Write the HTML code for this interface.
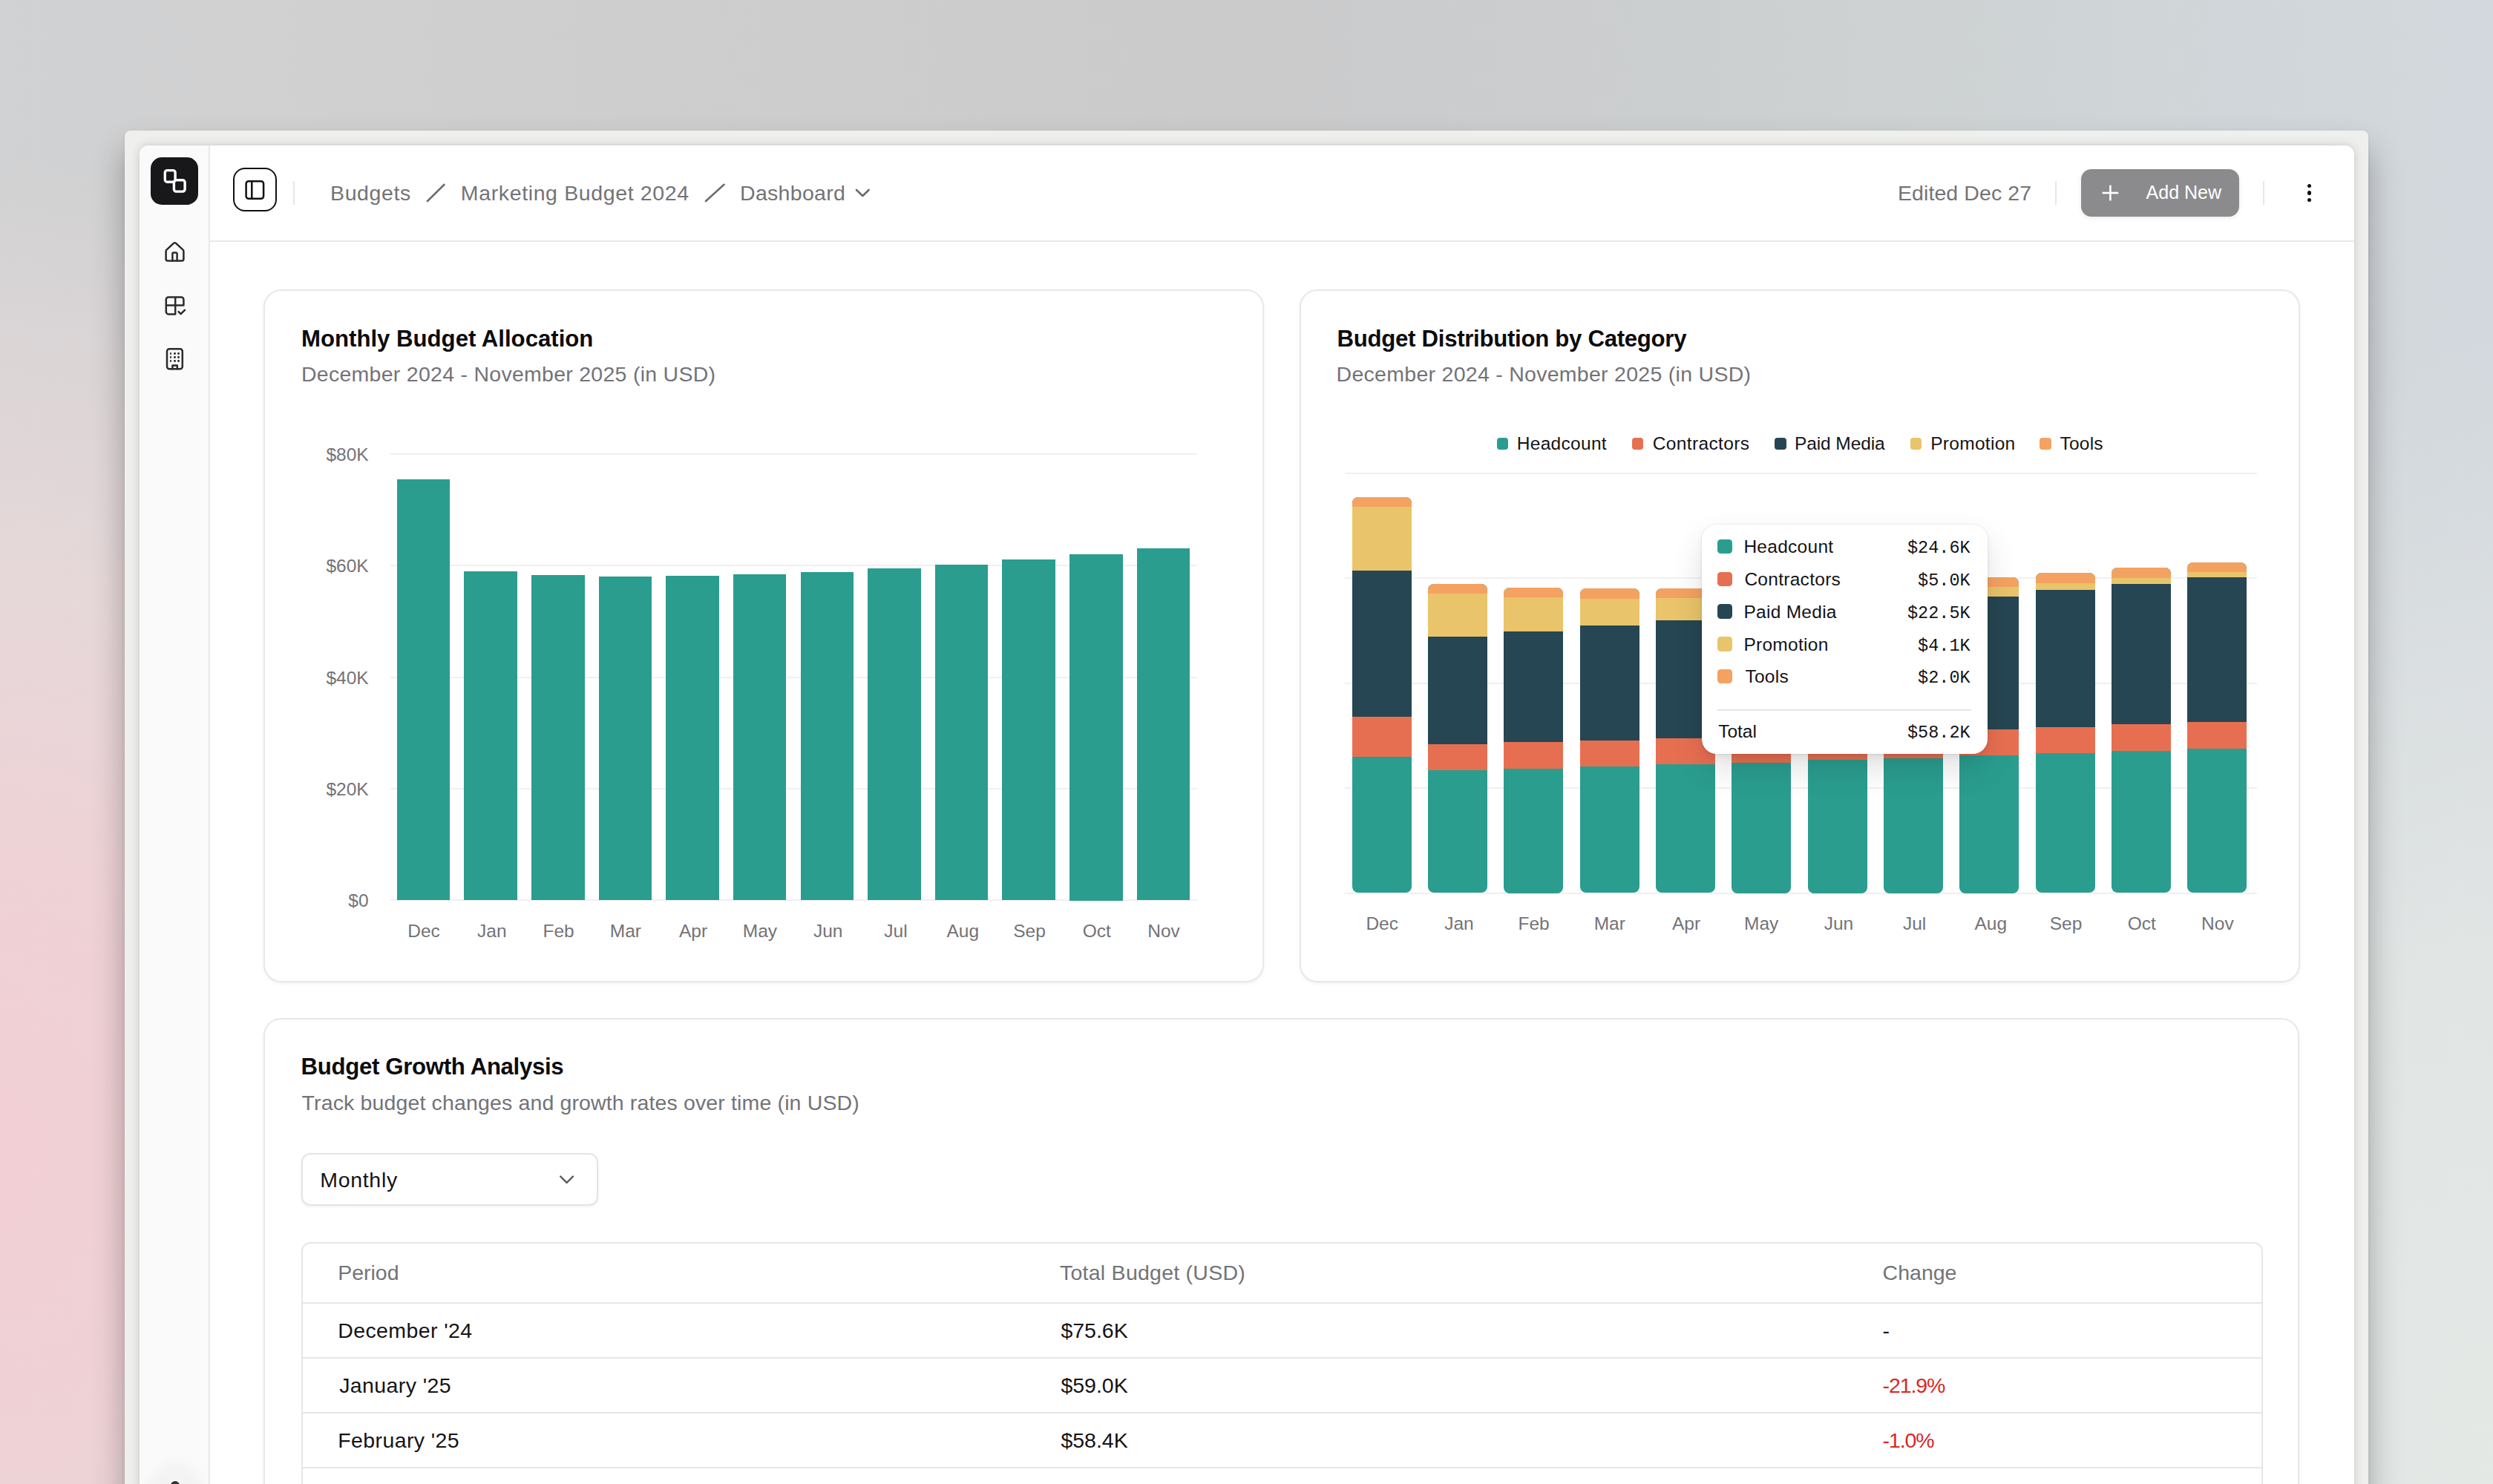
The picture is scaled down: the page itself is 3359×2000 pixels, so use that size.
<!DOCTYPE html>
<html>
<head>
<meta charset="utf-8">
<style>
*{box-sizing:border-box;margin:0;padding:0}
html,body{width:3359px;height:2000px;overflow:hidden}
body{position:relative;font-family:"Liberation Sans",sans-serif;
background:
 radial-gradient(ellipse 900px 1350px at 0px 1560px, rgba(242,207,212,1) 0%, rgba(240,210,214,0.95) 30%, rgba(236,218,219,0.75) 60%, rgba(230,222,223,0) 100%),
 radial-gradient(ellipse 800px 1500px at 3359px 1950px, rgba(228,233,230,1) 0%, rgba(227,231,229,0.85) 45%, rgba(227,231,229,0) 100%),
 linear-gradient(90deg,#d1d2d3 0%,#cfcecf 25%,#cbcbcc 50%,#cbcdce 62%,#cdd1d1 74%,#d0d5d8 86%,#d3d8de 100%);
}
.abs{position:absolute}
.t{position:absolute;white-space:nowrap;line-height:1}
#frame{position:absolute;left:168px;top:176px;width:3023px;height:1900px;border-radius:8px;background:#efefee;
 box-shadow:0 26px 44px rgba(0,0,0,0.30), 0 2px 4px rgba(0,0,0,0.08)}
#win{position:absolute;left:188px;top:196px;width:2984px;height:1900px;border-radius:12px;background:#fff;overflow:hidden;
 box-shadow:0 0 14px rgba(0,0,0,0.16), 0 0 2px rgba(0,0,0,0.08)}
#side{position:absolute;left:0;top:0;width:95px;height:100%;background:#fafafa;border-right:2px solid #e9e9e9}
</style>
</head>
<body>
<div id="frame"></div>
<div id="win"><div id="side"></div></div>
<div class='abs' style='left:203.30px;top:212.00px;width:64.10px;height:64.00px;background:#18181b;border-radius:15px'></div>
<svg class='abs' style='left:0;top:0' width='400' height='400' viewBox='0 0 400 400'>
<rect x='222.3' y='229.6' width='13.8' height='15.6' rx='3' fill='none' stroke='#fff' stroke-width='3.4'/>
<rect x='234.4' y='242.7' width='14.7' height='15.4' rx='3' fill='none' stroke='#fff' stroke-width='3.4'/>
</svg>
<div class='abs' style='left:314.00px;top:226.00px;width:59.20px;height:59.40px;border:2.8px solid #111;border-radius:16px;background:#fff'></div>
<svg class='abs' style='left:0;top:0' width='400' height='400' viewBox='0 0 400 400'>
<rect x='331.6' y='244.2' width='23.5' height='23.6' rx='3.5' fill='none' stroke='#111' stroke-width='2.5'/>
<line x1='339.3' y1='244.2' x2='339.3' y2='267.8' stroke='#111' stroke-width='2.5'/>
</svg>
<div class='abs' style='left:395.00px;top:244.00px;width:2.00px;height:32.00px;background:#e7e7e7'></div>
<div class='t' id='bc1' style="top:246.38px;font-size:28.5px;color:#737378;font-weight:400;font-family:'Liberation Sans';letter-spacing:0.62px;left:445.00px">Budgets</div>
<div class='t' id='bc2' style="top:246.38px;font-size:28.5px;color:#737378;font-weight:400;font-family:'Liberation Sans';letter-spacing:0.63px;left:620.80px">Marketing Budget 2024</div>
<div class='t' id='bc3' style="top:246.38px;font-size:28.5px;color:#737378;font-weight:400;font-family:'Liberation Sans';letter-spacing:0.3px;left:997.00px">Dashboard</div>
<svg class='abs' style='left:0;top:0' width='1300' height='400' viewBox='0 0 1300 400'>
<line x1='576' y1='271' x2='598.5' y2='248.8' stroke='#6b6b70' stroke-width='2.6' stroke-linecap='round'/>
<line x1='951' y1='271' x2='975.5' y2='248.8' stroke='#6b6b70' stroke-width='2.6' stroke-linecap='round'/>
<polyline points='1154,256 1162.3,264 1170.6,256' fill='none' stroke='#6b6b70' stroke-width='2.6' stroke-linecap='round' stroke-linejoin='round'/>
</svg>
<div class='t' id='edited' style="top:246.38px;font-size:28.5px;color:#737378;font-weight:400;font-family:'Liberation Sans';letter-spacing:0.08px;left:2557.00px">Edited Dec 27</div>
<div class='abs' style='left:2769.40px;top:244.00px;width:2.00px;height:31.50px;background:#e7e7e7'></div>
<div class='abs' style='left:2803.70px;top:228.10px;width:213.30px;height:63.70px;background:#8b8b8d;border-radius:14px;box-shadow:0 2px 6px rgba(0,0,0,0.08)'></div>
<svg class='abs' style='left:2800px;top:220px' width='80' height='80' viewBox='2800 220 80 80'>
<line x1='2843.4' y1='249.6' x2='2843.4' y2='270.4' stroke='#fff' stroke-width='2.6'/>
<line x1='2832.6' y1='260' x2='2854.2' y2='260' stroke='#fff' stroke-width='2.6'/>
</svg>
<div class='t' id='addnew' style="top:247.25px;font-size:25px;color:#ffffff;font-weight:400;font-family:'Liberation Sans';left:2891.60px">Add New</div>
<div class='abs' style='left:3049.40px;top:244.00px;width:2.00px;height:31.50px;background:#e7e7e7'></div>
<div class='abs' style='left:3108.70px;top:247.70px;width:5.60px;height:5.60px;background:#111;border-radius:50%'></div>
<div class='abs' style='left:3108.70px;top:257.20px;width:5.60px;height:5.60px;background:#111;border-radius:50%'></div>
<div class='abs' style='left:3108.70px;top:266.60px;width:5.60px;height:5.60px;background:#111;border-radius:50%'></div>
<div class='abs' style='left:282.00px;top:323.60px;width:2890.00px;height:2.00px;background:#e9e9e9'></div>
<svg class='abs' style='left:200px;top:300px' width='80' height='220' viewBox='200 300 80 220' fill='none' stroke='#2b2b2e' stroke-width='2.5' stroke-linecap='round' stroke-linejoin='round'>
<path d='M223.6 338.5 V349 a2.5 2.5 0 0 0 2.5 2.5 H244.9 a2.5 2.5 0 0 0 2.5-2.5 V338.5 a2.5 2.5 0 0 0 -0.9-1.9 L237.1 327.9 a2.5 2.5 0 0 0 -3.2 0 L224.5 336.6 a2.5 2.5 0 0 0 -0.9 1.9 Z'/>
<path d='M232.4 351.5 V342 a1.5 1.5 0 0 1 1.5-1.5 H237.1 a1.5 1.5 0 0 1 1.5 1.5 V351.5'/>
<path d='M236.2 423.4 H227 a3.2 3.2 0 0 1 -3.2-3.2 V403.6 a3.2 3.2 0 0 1 3.2-3.2 H244.2 a3.2 3.2 0 0 1 3.2 3.2 V411.5 H236.2 V400.4 M223.8 411.5 H236.2 V423.4'/>
<path d='M240.6 420.2 L243.6 423.2 L249 417.8'/>
<rect x='225' y='470.2' width='20.8' height='27.1' rx='3.2'/>
<path d='M232.4 497.3 V492.5 H238.8 V497.3'/>
</svg>
<div class='abs' style='left:228.70px;top:474.80px;width:2.80px;height:2.80px;background:#2b2b2e;border-radius:50%'></div>
<div class='abs' style='left:234.00px;top:474.80px;width:2.80px;height:2.80px;background:#2b2b2e;border-radius:50%'></div>
<div class='abs' style='left:239.30px;top:474.80px;width:2.80px;height:2.80px;background:#2b2b2e;border-radius:50%'></div>
<div class='abs' style='left:228.70px;top:479.90px;width:2.80px;height:2.80px;background:#2b2b2e;border-radius:50%'></div>
<div class='abs' style='left:234.00px;top:479.90px;width:2.80px;height:2.80px;background:#2b2b2e;border-radius:50%'></div>
<div class='abs' style='left:239.30px;top:479.90px;width:2.80px;height:2.80px;background:#2b2b2e;border-radius:50%'></div>
<div class='abs' style='left:228.70px;top:485.00px;width:2.80px;height:2.80px;background:#2b2b2e;border-radius:50%'></div>
<div class='abs' style='left:234.00px;top:485.00px;width:2.80px;height:2.80px;background:#2b2b2e;border-radius:50%'></div>
<div class='abs' style='left:239.30px;top:485.00px;width:2.80px;height:2.80px;background:#2b2b2e;border-radius:50%'></div>
<div class='abs' style='left:355.40px;top:389.50px;width:1348.00px;height:934.00px;border:2px solid #e8e8e8;border-radius:24px;background:#fff;box-shadow:0 2px 5px rgba(0,0,0,0.05)'></div>
<div class='abs' style='left:1751.30px;top:389.50px;width:1347.40px;height:934.00px;border:2px solid #e8e8e8;border-radius:24px;background:#fff;box-shadow:0 2px 5px rgba(0,0,0,0.05)'></div>
<div class='abs' style='left:355.20px;top:1371.50px;width:2742.80px;height:728.50px;border:2px solid #e8e8e8;border-radius:24px;background:#fff;box-shadow:0 2px 5px rgba(0,0,0,0.05)'></div>
<div class='t' id='c1title' style="top:440.68px;font-size:31.2px;color:#0c0c0e;font-weight:700;font-family:'Liberation Sans';letter-spacing:-0.02px;left:406.00px">Monthly Budget Allocation</div>
<div class='t' id='c1sub' style="top:490.07px;font-size:28.5px;color:#737378;font-weight:400;font-family:'Liberation Sans';letter-spacing:0.27px;left:406.00px">December 2024 - November 2025 (in USD)</div>
<div class='abs' style='left:525.70px;top:610.70px;width:1087.50px;height:2.00px;background:#f0f0f0'></div>
<div class='abs' style='left:525.70px;top:761.10px;width:1087.50px;height:2.00px;background:#f0f0f0'></div>
<div class='abs' style='left:525.70px;top:911.50px;width:1087.50px;height:2.00px;background:#f0f0f0'></div>
<div class='abs' style='left:525.70px;top:1061.90px;width:1087.50px;height:2.00px;background:#f0f0f0'></div>
<div class='abs' style='left:525.70px;top:1212.30px;width:1087.50px;height:2.00px;background:#f0f0f0'></div>
<div class='t' id='yl0' style="top:601.17px;font-size:24.5px;color:#737378;font-weight:400;font-family:'Liberation Sans';right:2862.40px">$80K</div>
<div class='t' id='yl1' style="top:751.47px;font-size:24.5px;color:#737378;font-weight:400;font-family:'Liberation Sans';right:2862.40px">$60K</div>
<div class='t' id='yl2' style="top:901.77px;font-size:24.5px;color:#737378;font-weight:400;font-family:'Liberation Sans';right:2862.40px">$40K</div>
<div class='t' id='yl3' style="top:1052.08px;font-size:24.5px;color:#737378;font-weight:400;font-family:'Liberation Sans';right:2862.40px">$20K</div>
<div class='t' id='yl4' style="top:1202.38px;font-size:24.5px;color:#737378;font-weight:400;font-family:'Liberation Sans';right:2862.40px">$0</div>
<div class='abs' style='left:534.70px;top:645.80px;width:71.60px;height:567.70px;background:#2a9d8f'></div>
<div class='t' id='x1_0' style="top:1243.27px;font-size:24.5px;color:#737378;font-weight:400;font-family:'Liberation Sans';left:271.00px;width:600px;text-align:center">Dec</div>
<div class='abs' style='left:625.34px;top:770.20px;width:71.60px;height:443.30px;background:#2a9d8f'></div>
<div class='t' id='x1_1' style="top:1243.27px;font-size:24.5px;color:#737378;font-weight:400;font-family:'Liberation Sans';left:362.78px;width:600px;text-align:center">Jan</div>
<div class='abs' style='left:715.98px;top:774.70px;width:71.60px;height:438.80px;background:#2a9d8f'></div>
<div class='t' id='x1_2' style="top:1243.27px;font-size:24.5px;color:#737378;font-weight:400;font-family:'Liberation Sans';left:452.56px;width:600px;text-align:center">Feb</div>
<div class='abs' style='left:806.62px;top:776.60px;width:71.60px;height:436.90px;background:#2a9d8f'></div>
<div class='t' id='x1_3' style="top:1243.27px;font-size:24.5px;color:#737378;font-weight:400;font-family:'Liberation Sans';left:542.84px;width:600px;text-align:center">Mar</div>
<div class='abs' style='left:897.26px;top:776.40px;width:71.60px;height:437.10px;background:#2a9d8f'></div>
<div class='t' id='x1_4' style="top:1243.27px;font-size:24.5px;color:#737378;font-weight:400;font-family:'Liberation Sans';left:634.12px;width:600px;text-align:center">Apr</div>
<div class='abs' style='left:987.90px;top:774.20px;width:71.60px;height:439.30px;background:#2a9d8f'></div>
<div class='t' id='x1_5' style="top:1243.27px;font-size:24.5px;color:#737378;font-weight:400;font-family:'Liberation Sans';left:723.90px;width:600px;text-align:center">May</div>
<div class='abs' style='left:1078.54px;top:771.10px;width:71.60px;height:442.40px;background:#2a9d8f'></div>
<div class='t' id='x1_6' style="top:1243.27px;font-size:24.5px;color:#737378;font-weight:400;font-family:'Liberation Sans';left:815.68px;width:600px;text-align:center">Jun</div>
<div class='abs' style='left:1169.18px;top:766.10px;width:71.60px;height:447.40px;background:#2a9d8f'></div>
<div class='t' id='x1_7' style="top:1243.27px;font-size:24.5px;color:#737378;font-weight:400;font-family:'Liberation Sans';left:906.96px;width:600px;text-align:center">Jul</div>
<div class='abs' style='left:1259.82px;top:760.70px;width:71.60px;height:452.80px;background:#2a9d8f'></div>
<div class='t' id='x1_8' style="top:1243.27px;font-size:24.5px;color:#737378;font-weight:400;font-family:'Liberation Sans';left:997.24px;width:600px;text-align:center">Aug</div>
<div class='abs' style='left:1350.46px;top:754.10px;width:71.60px;height:459.40px;background:#2a9d8f'></div>
<div class='t' id='x1_9' style="top:1243.27px;font-size:24.5px;color:#737378;font-weight:400;font-family:'Liberation Sans';left:1087.02px;width:600px;text-align:center">Sep</div>
<div class='abs' style='left:1441.10px;top:747.00px;width:71.60px;height:466.50px;background:#2a9d8f'></div>
<div class='t' id='x1_10' style="top:1243.27px;font-size:24.5px;color:#737378;font-weight:400;font-family:'Liberation Sans';left:1177.80px;width:600px;text-align:center">Oct</div>
<div class='abs' style='left:1531.74px;top:738.90px;width:71.60px;height:474.60px;background:#2a9d8f'></div>
<div class='t' id='x1_11' style="top:1243.27px;font-size:24.5px;color:#737378;font-weight:400;font-family:'Liberation Sans';left:1268.08px;width:600px;text-align:center">Nov</div>
<div class='t' id='c2title' style="top:440.68px;font-size:31.2px;color:#0c0c0e;font-weight:700;font-family:'Liberation Sans';letter-spacing:-0.3px;left:1801.60px">Budget Distribution by Category</div>
<div class='t' id='c2sub' style="top:489.98px;font-size:28.5px;color:#737378;font-weight:400;font-family:'Liberation Sans';letter-spacing:0.28px;left:1800.60px">December 2024 - November 2025 (in USD)</div>
<div class='abs' style='left:2016.60px;top:590.10px;width:15.60px;height:15.60px;background:#2a9d8f;border-radius:4px'></div>
<div class='t' id='lg0' style="top:586.17px;font-size:24.5px;color:#141416;font-weight:400;font-family:'Liberation Sans';letter-spacing:0.29px;left:2043.80px">Headcount</div>
<div class='abs' style='left:2198.90px;top:590.10px;width:15.60px;height:15.60px;background:#e76f51;border-radius:4px'></div>
<div class='t' id='lg1' style="top:586.17px;font-size:24.5px;color:#141416;font-weight:400;font-family:'Liberation Sans';letter-spacing:0.36px;left:2226.80px">Contractors</div>
<div class='abs' style='left:2391.10px;top:590.10px;width:15.60px;height:15.60px;background:#264653;border-radius:4px'></div>
<div class='t' id='lg2' style="top:586.17px;font-size:24.5px;color:#141416;font-weight:400;font-family:'Liberation Sans';letter-spacing:-0.1px;left:2418.00px">Paid Media</div>
<div class='abs' style='left:2573.90px;top:590.10px;width:15.60px;height:15.60px;background:#e9c46a;border-radius:4px'></div>
<div class='t' id='lg3' style="top:586.17px;font-size:24.5px;color:#141416;font-weight:400;font-family:'Liberation Sans';letter-spacing:0.3px;left:2601.20px">Promotion</div>
<div class='abs' style='left:2748.10px;top:590.10px;width:15.60px;height:15.60px;background:#f4a261;border-radius:4px'></div>
<div class='t' id='lg4' style="top:586.17px;font-size:24.5px;color:#141416;font-weight:400;font-family:'Liberation Sans';letter-spacing:0.25px;left:2775.40px">Tools</div>
<div class='abs' style='left:1811.80px;top:636.60px;width:1228.80px;height:2.00px;background:#f0f0f0'></div>
<div class='abs' style='left:1811.80px;top:778.00px;width:1228.80px;height:2.00px;background:#f0f0f0'></div>
<div class='abs' style='left:1811.80px;top:919.50px;width:1228.80px;height:2.00px;background:#f0f0f0'></div>
<div class='abs' style='left:1811.80px;top:1061.00px;width:1228.80px;height:2.00px;background:#f0f0f0'></div>
<div class='abs' style='left:1811.80px;top:1202.50px;width:1228.80px;height:2.00px;background:#f0f0f0'></div>
<div class='abs' style='left:1821.60px;top:669.60px;width:80px;height:533.90px;border-radius:8px;overflow:hidden;background:#2a9d8f'><div class='abs' style='left:0;top:0;width:80px;height:13.50px;background:#f4a261'></div><div class='abs' style='left:0;top:13.50px;width:80px;height:85.70px;background:#e9c46a'></div><div class='abs' style='left:0;top:99.20px;width:80px;height:197.30px;background:#264653'></div><div class='abs' style='left:0;top:296.50px;width:80px;height:53.60px;background:#e76f51'></div></div>
<div class='t' id='x2_0' style="top:1233.17px;font-size:24.5px;color:#737378;font-weight:400;font-family:'Liberation Sans';left:1562.20px;width:600px;text-align:center">Dec</div>
<div class='abs' style='left:1923.95px;top:787.20px;width:80px;height:416.30px;border-radius:8px;overflow:hidden;background:#2a9d8f'><div class='abs' style='left:0;top:0;width:80px;height:13.20px;background:#f4a261'></div><div class='abs' style='left:0;top:13.20px;width:80px;height:57.40px;background:#e9c46a'></div><div class='abs' style='left:0;top:70.60px;width:80px;height:145.10px;background:#264653'></div><div class='abs' style='left:0;top:215.70px;width:80px;height:35.10px;background:#e76f51'></div></div>
<div class='t' id='x2_1' style="top:1233.17px;font-size:24.5px;color:#737378;font-weight:400;font-family:'Liberation Sans';left:1665.90px;width:600px;text-align:center">Jan</div>
<div class='abs' style='left:2026.30px;top:791.50px;width:80px;height:412.00px;border-radius:8px;overflow:hidden;background:#2a9d8f'><div class='abs' style='left:0;top:0;width:80px;height:13.50px;background:#f4a261'></div><div class='abs' style='left:0;top:13.50px;width:80px;height:45.80px;background:#e9c46a'></div><div class='abs' style='left:0;top:59.30px;width:80px;height:149.20px;background:#264653'></div><div class='abs' style='left:0;top:208.50px;width:80px;height:35.80px;background:#e76f51'></div></div>
<div class='t' id='x2_2' style="top:1233.17px;font-size:24.5px;color:#737378;font-weight:400;font-family:'Liberation Sans';left:1766.60px;width:600px;text-align:center">Feb</div>
<div class='abs' style='left:2128.65px;top:793.10px;width:80px;height:410.40px;border-radius:8px;overflow:hidden;background:#2a9d8f'><div class='abs' style='left:0;top:0;width:80px;height:13.50px;background:#f4a261'></div><div class='abs' style='left:0;top:13.50px;width:80px;height:36.40px;background:#e9c46a'></div><div class='abs' style='left:0;top:49.90px;width:80px;height:154.60px;background:#264653'></div><div class='abs' style='left:0;top:204.50px;width:80px;height:35.30px;background:#e76f51'></div></div>
<div class='t' id='x2_3' style="top:1233.17px;font-size:24.5px;color:#737378;font-weight:400;font-family:'Liberation Sans';left:1868.80px;width:600px;text-align:center">Mar</div>
<div class='abs' style='left:2231.00px;top:792.80px;width:80px;height:410.70px;border-radius:8px;overflow:hidden;background:#2a9d8f'><div class='abs' style='left:0;top:0;width:80px;height:13.50px;background:#f4a261'></div><div class='abs' style='left:0;top:13.50px;width:80px;height:29.90px;background:#e9c46a'></div><div class='abs' style='left:0;top:43.40px;width:80px;height:158.40px;background:#264653'></div><div class='abs' style='left:0;top:201.80px;width:80px;height:35.80px;background:#e76f51'></div></div>
<div class='t' id='x2_4' style="top:1233.17px;font-size:24.5px;color:#737378;font-weight:400;font-family:'Liberation Sans';left:1972.00px;width:600px;text-align:center">Apr</div>
<div class='abs' style='left:2333.35px;top:790.00px;width:80px;height:413.50px;border-radius:8px;overflow:hidden;background:#2a9d8f'><div class='abs' style='left:0;top:0;width:80px;height:13.00px;background:#f4a261'></div><div class='abs' style='left:0;top:13.00px;width:80px;height:26.00px;background:#e9c46a'></div><div class='abs' style='left:0;top:39.00px;width:80px;height:162.50px;background:#264653'></div><div class='abs' style='left:0;top:201.50px;width:80px;height:36.10px;background:#e76f51'></div></div>
<div class='t' id='x2_5' style="top:1233.17px;font-size:24.5px;color:#737378;font-weight:400;font-family:'Liberation Sans';left:2073.20px;width:600px;text-align:center">May</div>
<div class='abs' style='left:2435.70px;top:786.00px;width:80px;height:417.50px;border-radius:8px;overflow:hidden;background:#2a9d8f'><div class='abs' style='left:0;top:0;width:80px;height:13.00px;background:#f4a261'></div><div class='abs' style='left:0;top:13.00px;width:80px;height:21.00px;background:#e9c46a'></div><div class='abs' style='left:0;top:34.00px;width:80px;height:168.50px;background:#264653'></div><div class='abs' style='left:0;top:202.50px;width:80px;height:35.80px;background:#e76f51'></div></div>
<div class='t' id='x2_6' style="top:1233.17px;font-size:24.5px;color:#737378;font-weight:400;font-family:'Liberation Sans';left:2177.40px;width:600px;text-align:center">Jun</div>
<div class='abs' style='left:2538.05px;top:782.00px;width:80px;height:421.50px;border-radius:8px;overflow:hidden;background:#2a9d8f'><div class='abs' style='left:0;top:0;width:80px;height:13.00px;background:#f4a261'></div><div class='abs' style='left:0;top:13.00px;width:80px;height:17.00px;background:#e9c46a'></div><div class='abs' style='left:0;top:30.00px;width:80px;height:173.50px;background:#264653'></div><div class='abs' style='left:0;top:203.50px;width:80px;height:36.20px;background:#e76f51'></div></div>
<div class='t' id='x2_7' style="top:1233.17px;font-size:24.5px;color:#737378;font-weight:400;font-family:'Liberation Sans';left:2279.60px;width:600px;text-align:center">Jul</div>
<div class='abs' style='left:2640.40px;top:778.00px;width:80px;height:425.50px;border-radius:8px;overflow:hidden;background:#2a9d8f'><div class='abs' style='left:0;top:0;width:80px;height:13.00px;background:#f4a261'></div><div class='abs' style='left:0;top:13.00px;width:80px;height:13.30px;background:#e9c46a'></div><div class='abs' style='left:0;top:26.30px;width:80px;height:178.40px;background:#264653'></div><div class='abs' style='left:0;top:204.70px;width:80px;height:35.70px;background:#e76f51'></div></div>
<div class='t' id='x2_8' style="top:1233.17px;font-size:24.5px;color:#737378;font-weight:400;font-family:'Liberation Sans';left:2382.30px;width:600px;text-align:center">Aug</div>
<div class='abs' style='left:2742.75px;top:771.90px;width:80px;height:431.60px;border-radius:8px;overflow:hidden;background:#2a9d8f'><div class='abs' style='left:0;top:0;width:80px;height:14.00px;background:#f4a261'></div><div class='abs' style='left:0;top:14.00px;width:80px;height:9.30px;background:#e9c46a'></div><div class='abs' style='left:0;top:23.30px;width:80px;height:184.40px;background:#264653'></div><div class='abs' style='left:0;top:207.70px;width:80px;height:35.80px;background:#e76f51'></div></div>
<div class='t' id='x2_9' style="top:1233.17px;font-size:24.5px;color:#737378;font-weight:400;font-family:'Liberation Sans';left:2483.50px;width:600px;text-align:center">Sep</div>
<div class='abs' style='left:2845.10px;top:765.10px;width:80px;height:438.40px;border-radius:8px;overflow:hidden;background:#2a9d8f'><div class='abs' style='left:0;top:0;width:80px;height:13.70px;background:#f4a261'></div><div class='abs' style='left:0;top:13.70px;width:80px;height:8.10px;background:#e9c46a'></div><div class='abs' style='left:0;top:21.80px;width:80px;height:189.10px;background:#264653'></div><div class='abs' style='left:0;top:210.90px;width:80px;height:36.00px;background:#e76f51'></div></div>
<div class='t' id='x2_10' style="top:1233.17px;font-size:24.5px;color:#737378;font-weight:400;font-family:'Liberation Sans';left:2585.70px;width:600px;text-align:center">Oct</div>
<div class='abs' style='left:2947.45px;top:757.80px;width:80px;height:445.70px;border-radius:8px;overflow:hidden;background:#2a9d8f'><div class='abs' style='left:0;top:0;width:80px;height:13.50px;background:#f4a261'></div><div class='abs' style='left:0;top:13.50px;width:80px;height:6.50px;background:#e9c46a'></div><div class='abs' style='left:0;top:20.00px;width:80px;height:195.30px;background:#264653'></div><div class='abs' style='left:0;top:215.30px;width:80px;height:35.80px;background:#e76f51'></div></div>
<div class='t' id='x2_11' style="top:1233.17px;font-size:24.5px;color:#737378;font-weight:400;font-family:'Liberation Sans';left:2687.90px;width:600px;text-align:center">Nov</div>
<div class='abs' style='left:2292.50px;top:707.20px;width:385.00px;height:308.40px;background:#fff;border-radius:20px;box-shadow:0 0 0 1.5px rgba(0,0,0,0.035), 0 20px 44px rgba(0,0,0,0.12), 0 4px 10px rgba(0,0,0,0.05)'></div>
<div class='abs' style='left:2313.80px;top:726.50px;width:20.20px;height:19.70px;background:#2a9d8f;border-radius:4.5px'></div>
<div class='t' id='tt0' style="top:724.77px;font-size:24.5px;color:#141416;font-weight:400;font-family:'Liberation Sans';letter-spacing:0.28px;left:2349.40px">Headcount</div>
<div class='t' id='tv0' style="top:726.79px;font-size:23.5px;color:#141416;font-weight:400;font-family:'Liberation Mono';right:704.40px">$24.6K</div>
<div class='abs' style='left:2313.80px;top:770.50px;width:20.20px;height:19.70px;background:#e76f51;border-radius:4.5px'></div>
<div class='t' id='tt1' style="top:768.77px;font-size:24.5px;color:#141416;font-weight:400;font-family:'Liberation Sans';letter-spacing:0.28px;left:2350.40px">Contractors</div>
<div class='t' id='tv1' style="top:770.79px;font-size:23.5px;color:#141416;font-weight:400;font-family:'Liberation Mono';right:704.40px">$5.0K</div>
<div class='abs' style='left:2313.80px;top:814.30px;width:20.20px;height:19.70px;background:#264653;border-radius:4.5px'></div>
<div class='t' id='tt2' style="top:812.57px;font-size:24.5px;color:#141416;font-weight:400;font-family:'Liberation Sans';letter-spacing:0.28px;left:2349.40px">Paid Media</div>
<div class='t' id='tv2' style="top:814.59px;font-size:23.5px;color:#141416;font-weight:400;font-family:'Liberation Mono';right:704.40px">$22.5K</div>
<div class='abs' style='left:2313.80px;top:858.30px;width:20.20px;height:19.70px;background:#e9c46a;border-radius:4.5px'></div>
<div class='t' id='tt3' style="top:856.57px;font-size:24.5px;color:#141416;font-weight:400;font-family:'Liberation Sans';letter-spacing:0.28px;left:2349.40px">Promotion</div>
<div class='t' id='tv3' style="top:858.59px;font-size:23.5px;color:#141416;font-weight:400;font-family:'Liberation Mono';right:704.40px">$4.1K</div>
<div class='abs' style='left:2313.80px;top:901.80px;width:20.20px;height:19.70px;background:#f4a261;border-radius:4.5px'></div>
<div class='t' id='tt4' style="top:900.07px;font-size:24.5px;color:#141416;font-weight:400;font-family:'Liberation Sans';letter-spacing:0.28px;left:2351.40px">Tools</div>
<div class='t' id='tv4' style="top:902.09px;font-size:23.5px;color:#141416;font-weight:400;font-family:'Liberation Mono';right:704.40px">$2.0K</div>
<div class='abs' style='left:2313.80px;top:956.00px;width:341.90px;height:2.00px;background:#e6e6e6'></div>
<div class='t' id='tt5' style="top:974.07px;font-size:24.5px;color:#141416;font-weight:400;font-family:'Liberation Sans';left:2315.20px">Total</div>
<div class='t' id='tv5' style="top:976.09px;font-size:23.5px;color:#141416;font-weight:400;font-family:'Liberation Mono';right:704.40px">$58.2K</div>
<div class='t' id='c3title' style="top:1422.48px;font-size:31.2px;color:#0c0c0e;font-weight:700;font-family:'Liberation Sans';letter-spacing:-0.33px;left:405.60px">Budget Growth Analysis</div>
<div class='t' id='c3sub' style="top:1472.08px;font-size:28.5px;color:#737378;font-weight:400;font-family:'Liberation Sans';letter-spacing:0.14px;left:406.60px">Track budget changes and growth rates over time (in USD)</div>
<div class='abs' style='left:405.80px;top:1553.80px;width:399.80px;height:71.70px;border:2px solid #e4e4e4;border-radius:12px;background:#fff;box-shadow:0 2px 4px rgba(0,0,0,0.05)'></div>
<div class='t' id='monthly' style="top:1575.78px;font-size:28.5px;color:#141416;font-weight:400;font-family:'Liberation Sans';letter-spacing:0.7px;left:431.20px">Monthly</div>
<svg class='abs' style='left:740px;top:1570px' width='50' height='40' viewBox='740 1570 50 40'>
<polyline points='755.2,1585.5 763.6,1594 772,1585.5' fill='none' stroke='#555' stroke-width='2.4' stroke-linecap='round' stroke-linejoin='round'/>
</svg>
<div class='abs' style='left:405.90px;top:1674.00px;width:2643.50px;height:426.00px;border:2px solid #e6e6e6;border-radius:12px;background:#fff'></div>
<div class='abs' style='left:407.00px;top:1755.30px;width:2641.40px;height:2.00px;background:#e6e6e6'></div>
<div class='abs' style='left:407.00px;top:1829.00px;width:2641.40px;height:2.00px;background:#e6e6e6'></div>
<div class='abs' style='left:407.00px;top:1903.00px;width:2641.40px;height:2.00px;background:#e6e6e6'></div>
<div class='abs' style='left:407.00px;top:1976.80px;width:2641.40px;height:2.00px;background:#e6e6e6'></div>
<div class='t' id='th1' style="top:1701.48px;font-size:28.5px;color:#737378;font-weight:400;font-family:'Liberation Sans';left:455.20px">Period</div>
<div class='t' id='th2' style="top:1701.48px;font-size:28.5px;color:#737378;font-weight:400;font-family:'Liberation Sans';letter-spacing:0.25px;left:1428.00px">Total Budget (USD)</div>
<div class='t' id='th3' style="top:1701.48px;font-size:28.5px;color:#737378;font-weight:400;font-family:'Liberation Sans';left:2536.60px">Change</div>
<div class='t' id='r0a' style="top:1778.78px;font-size:28.5px;color:#141416;font-weight:400;font-family:'Liberation Sans';letter-spacing:0.4px;left:455.20px">December &#39;24</div>
<div class='t' id='r0b' style="top:1778.78px;font-size:28.5px;color:#141416;font-weight:400;font-family:'Liberation Sans';left:1429.40px">$75.6K</div>
<div class='t' id='r0c' style="top:1778.78px;font-size:28.5px;color:#141416;font-weight:400;font-family:'Liberation Sans';left:2536.60px">-</div>
<div class='t' id='r1a' style="top:1853.08px;font-size:28.5px;color:#141416;font-weight:400;font-family:'Liberation Sans';letter-spacing:0.4px;left:457.20px">January &#39;25</div>
<div class='t' id='r1b' style="top:1853.08px;font-size:28.5px;color:#141416;font-weight:400;font-family:'Liberation Sans';left:1429.40px">$59.0K</div>
<div class='t' id='r1c' style="top:1853.08px;font-size:28.5px;color:#dc2626;font-weight:400;font-family:'Liberation Sans';letter-spacing:-1.1px;left:2536.60px">-21.9%</div>
<div class='t' id='r2a' style="top:1926.98px;font-size:28.5px;color:#141416;font-weight:400;font-family:'Liberation Sans';letter-spacing:0.4px;left:455.20px">February &#39;25</div>
<div class='t' id='r2b' style="top:1926.98px;font-size:28.5px;color:#141416;font-weight:400;font-family:'Liberation Sans';left:1429.40px">$58.4K</div>
<div class='t' id='r2c' style="top:1926.98px;font-size:28.5px;color:#dc2626;font-weight:400;font-family:'Liberation Sans';letter-spacing:-1.1px;left:2536.60px">-1.0%</div>
<div class='abs' style='left:200.00px;top:1972.00px;width:72.00px;height:72.00px;background:#f3f3f3;border-radius:50%;filter:blur(6px)'></div>
<div class='abs' style='left:229.50px;top:1996.00px;width:12.00px;height:12.00px;background:#333;border-radius:50%;box-shadow:0 0 0 2px #fff'></div>
</body>
</html>
